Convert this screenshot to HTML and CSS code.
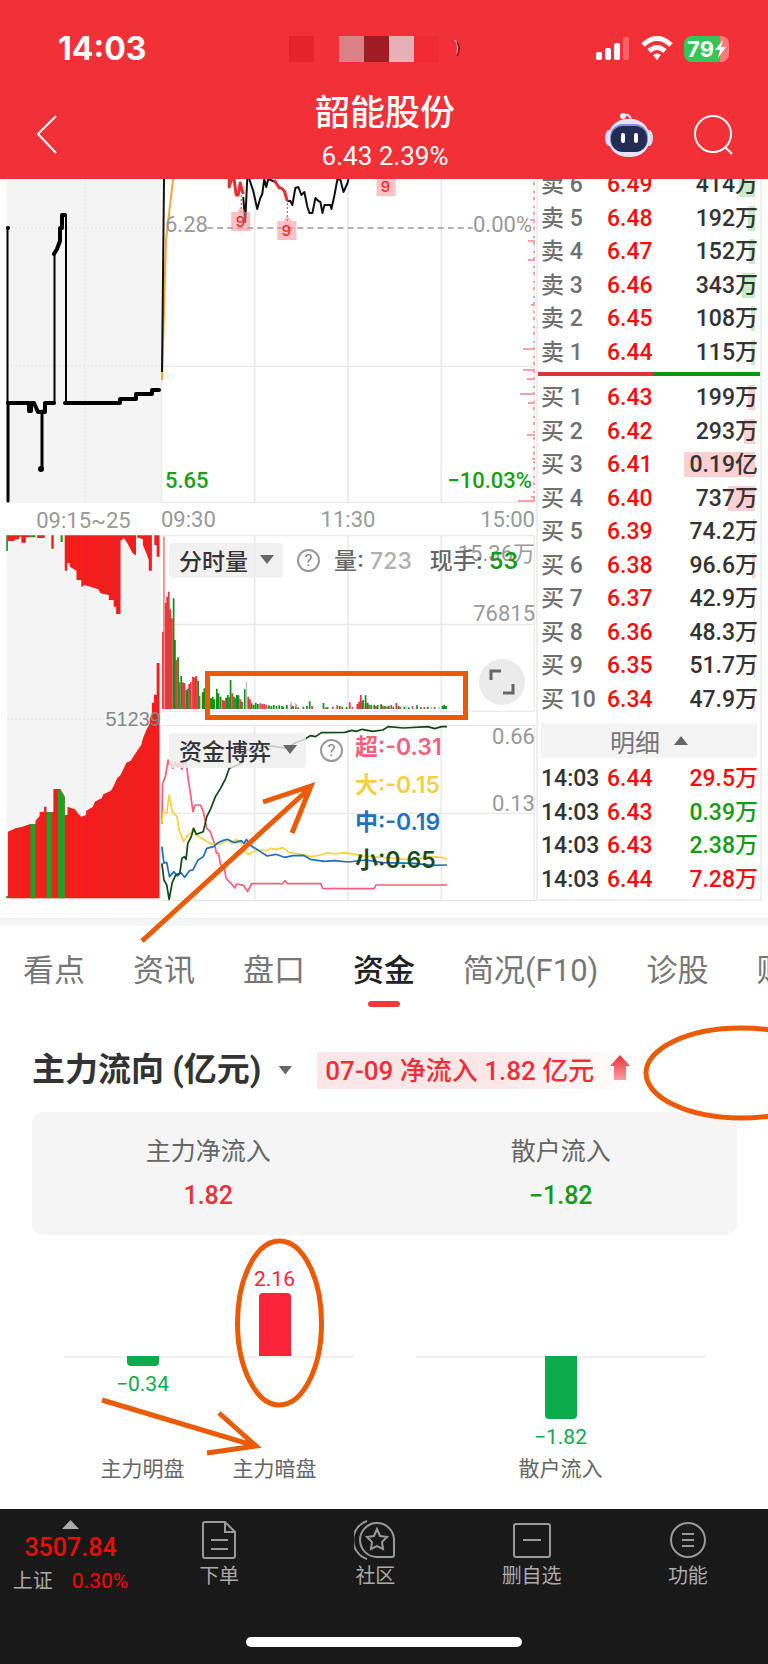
FILE: index.html
```html
<!DOCTYPE html>
<html lang="zh-CN">
<head>
<meta charset="utf-8">
<meta name="viewport" content="width=device-width, initial-scale=1">
<title>韶能股份</title>
<link rel="stylesheet" href="styles.css">
</head>
<body>
<div class="app">
  <header class="header">
    <div class="status">
      <span class="clock">14:03</span>
      <span class="mosaic"><i class="m1"></i><i></i><i class="m2"></i><i class="m3"></i><i class="m4"></i><i class="m5"></i><svg width="8" height="22" viewBox="0 0 8 22"><path d="M2 2q4 4 2 15" fill="none" stroke="#fff" stroke-width="1"/><path d="M4 4q4 6 0 14" fill="none" stroke="#611" stroke-width="1.5"/></svg></span>
      <span class="status-icons">
        <svg width="34" height="26" viewBox="0 0 34 26" fill="#fff"><rect y="16" width="6" height="8" rx="2"/><rect x="9" y="12" width="6" height="12" rx="2"/><rect x="18" y="7" width="6" height="17" rx="2"/><rect x="27" y="1" width="6" height="23" rx="2" opacity=".25"/></svg>
        <svg width="32" height="26" viewBox="0 0 32 26" fill="none" stroke="#fff" stroke-width="5"><path d="M2 9Q16-4 30 9"/><path d="M8 15q8-7 16 0"/><path d="M12 19q4-3 8 0l-4 5z" fill="#fff" stroke="none"/></svg>
        <span class="battery"><span>79</span><svg width="11" height="18" viewBox="0 0 11 18"><path d="M8 0L0 10h5L3 18l8-11H6z" fill="#fff"/></svg></span>
      </span>
    </div>
    <div class="nav">
      <button class="icon-btn back" aria-label="返回"><svg width="24" height="42" viewBox="0 0 24 42"><path d="M21 2L3 20l18 19" fill="none" stroke="#fff" stroke-width="2"/></svg></button>
      <div class="title"><h1>韶能股份</h1><p>6.43 2.39%</p></div>
      <div class="nav-actions">
        <button class="icon-btn" aria-label="智能助手"><svg width="50" height="46" viewBox="0 0 50 46"><path d="M27 8Q26 2 20 3" fill="none" stroke="#dfe3f5" stroke-width="2"/><circle cx="19" cy="4" r="3" fill="#e9ecfa"/><ellipse cx="5" cy="26" rx="4" ry="8" fill="#d9dcf4"/><ellipse cx="45" cy="26" rx="4" ry="8" fill="#d9dcf4"/><rect x="4" y="7" width="42" height="38" rx="19" fill="#e3e5fa"/><rect x="6" y="12" width="38" height="28" rx="13" fill="#8d89e0"/><rect x="7" y="14" width="36" height="26" rx="12" fill="#222c54"/><rect x="17" y="21" width="4" height="10" rx="2" fill="#fff"/><rect x="30" y="21" width="4" height="10" rx="2" fill="#fff"/></svg></button>
        <button class="icon-btn" aria-label="搜索"><svg width="42" height="42" viewBox="0 0 42 42" fill="none" stroke="#fff" stroke-width="2"><circle cx="20" cy="20" r="18"/><path d="M32 33l7 7"/></svg></button>
      </div>
    </div>
  </header>

  <main>
    <section class="market">
      <div class="auction">
        <svg class="plot-price" viewBox="0 179 161 324" preserveAspectRatio="none">
          <rect x="7" y="179" width="154" height="324" fill="#f4f4f4"/>
          <path d="M7 228H161M7 366H161M85 179V503" stroke="#e3e3e3" stroke-dasharray="2 2" fill="none"/>
          <g fill="none" stroke="#000" stroke-linejoin="round" stroke-linecap="round">
            <path d="M7.500 228V403M54.500 254V403M66 216V403" stroke-width="2"/>
            <path d="M8 403V501M42 411V468" stroke-width="3"/>
            <path d="M8 403H29V411H31V403H34L38 412H45V403H54M65 403H120V399H136V394H152V390H159M54 254L57 249L60 241V228H62V215H65" stroke-width="4"/>
          </g>
          <circle cx="8" cy="228" r="2"/><circle cx="41" cy="469" r="3"/>
        </svg>
        <div class="axis axis-left">09:15~25</div>
        <div class="auction-volume">
          <svg viewBox="0 535 161 366" preserveAspectRatio="none">
            <defs><pattern id="stripes" width="8" height="8" patternUnits="userSpaceOnUse"><rect width="8" height="8" fill="#ff1a1a"/><path d="M7 0V8" stroke="#c42c2c" stroke-width="2"/></pattern></defs>
            <rect x="7" y="535" width="154" height="364" fill="#f4f4f4"/>
            <path d="M7 719H161M85 535V899" stroke="#e3e3e3" stroke-dasharray="2 2" fill="none"/>
            <g transform="translate(0 530) scale(.3444 .3333)" fill="url(#stripes)">
              <path d="M22 16V33H40L45 28H56V20H62V38H75V22H88V16ZM108 16V24H130V16ZM149 16V56H156V16ZM188 16V122H195V100H203V110L222 122V150H236V172L245 165L262 170L285 178L292 190L316 195V210H330V230H337V252H350V32L360 25L370 40L385 70L395 76V16ZM398 16V22L415 28V45L425 70L432 90V122H441V16ZM448 16V45H455V80H463V16Z"/>
              <path d="M18 16H23V63H18ZM88 16H103V22H88ZM176 16H182V36H176Z" fill="#189b18"/>
            </g>
            <g transform="translate(0 700) scale(.3444 .3333)" fill="url(#stripes)">
              <path d="M23 595V395L45 385L65 380L88 372H103V362L115 348V336H128V320H135V336H155V267H175L182 280L188 290V345H196V320L218 328L225 338L235 350L250 345V333L270 320L275 305L295 295L300 283L322 272L330 258L340 235L350 225L357 210L367 188L380 182L390 165L400 150L410 135L415 115L425 90L435 70V50H441V8H447V-16H455V-111H463V595Z"/>
              <path d="M88 372H103V595H88ZM135 336H150V595H135ZM168 270L175 272L182 280L188 290V595H168ZM18 588H24V595H18Z" fill="#23a023"/>
            </g>
          </svg>
          <span class="auction-value">51239</span>
        </div>
      </div>

      <div class="intraday">
        <div class="price">
          <svg class="plot-price" viewBox="161 179 373 324" preserveAspectRatio="none">
            <path d="M161.500 366V503M254.500 179V503M347.500 179V503M440.500 179V503M533.500 179V503M161 366.500H534M161 502.500H534" stroke="#e9e9e9" stroke-width="1.500" fill="none"/>
            <path d="M207 228H472" stroke="#999" stroke-width="1.500" stroke-dasharray="6 4"/>
            <g fill="none" stroke-width="2" stroke-linejoin="round">
              <path d="M173 179L166 240L162 380" stroke="#f6a52f"/>
              <path d="M164 179L162 372" stroke="#111"/>
              <path d="M243 197L245 222L247 179M249 179L253 191L257 209L260 198L262 194L264 179L266 187L268 179L275 182M287 201H290L292 205L295 188L298 187L301 195L304 192L307 207L309 213H312L315 198L318 201L320 202L322 213L324 205H330L331 209L334 195L337 179L340 180L343 192L347 183L348 179" stroke="#111"/>
              <path d="M229 179V187L231 180L234 180L236 195H238L240 183L243 194M274 180L279 188L281 188L284 191L287 201" stroke="#e83030" stroke-width="3"/>
              <path d="M241 195V212M287 203V221" stroke="#e83030" stroke-width="1" stroke-dasharray="2 2"/>
              <path d="M533 182V503" stroke="#f4a3a8" stroke-dasharray="3 6 2 4"/>
              <path d="M529 220H534M527 241H534M527 260H534M530 305H534M522 349H534M522 370H534M526 379H534M519 394H534M527 403H534M526 435H534M531 459H534M530 497H534M517 501H534" stroke="#f4a3a8"/>
            </g>
            <path d="M237 212L241 206L245 212H250V231H231V212ZM283 221L287 215L291 221H296V240H277V221ZM376 178H395V196H376Z" fill="#f58d92" fill-opacity=".55"/>
          </svg>
          <span class="mark mark-a">9</span><span class="mark mark-b">9</span><span class="mark mark-c">9</span>
          <span class="tag tag-base">6.28</span><span class="tag tag-zero">0.00%</span>
          <span class="tag tag-low">5.65</span><span class="tag tag-drop">−10.03%</span>
        </div>
        <div class="axis"><span>09:30</span><span>11:30</span><span>15:00</span></div>
        <div class="panel">
          <svg viewBox="161 535 373 177" preserveAspectRatio="none">
            <path d="M161 535.500H534M161 624.500H534M161 711.500H534M254.500 535V712M347.500 535V712M440.500 535V712M533.500 535V712" stroke="#e9e9e9" stroke-width="1.500"/>
            <g transform="translate(0 530) scale(.3444 .3333)" fill="none" stroke-width="5">
              <path stroke="#e63a3e" d="M473 537V305M481 537V218M485 537V200M490 537V185M494 537V238M499 537V265M512 537V390M521 537V457M531 537V457M536 537V460M549 537V462M554 537V456M560 537V440M565 537V442M570 537V438M579 537V498M598 537V520M605 537V510M646 537V510M651 537V512M665 537V502M674 537V490M684 537V505M697 537V508M720 537V500M725 537V508M755 537V520M761 537V521M767 537V522M773 537V526M822 537V530M845 537V524M858 537V524M905 537V528M945 537V532M965 537V530M978 537V526M992 537V530M1014 537V517M1022 537V532M1036 537V522M1041 537V515M1046 537V495M1053 537V510M1060 537V520M1070 537V524M1090 537V528M1110 537V527M1122 537V530M1134 537V526M1149 537V519M1160 537V530M1196 537V529M1230 537V531M1260 537V531"/>
              <path stroke="#e63a3e" stroke-width="3" d="M476 537V20"/>
              <path stroke="#148f19" d="M504 537V205M508 537V330M517 537V382M526 537V438M541 537V480M545 537V476M575 537V452M588 537V487M593 537V475M612 537V505M617 537V500M622 537V508M629 537V476M634 537V490M640 537V500M656 537V503M661 537V495M669 537V450M679 537V500M687 537V495M692 537V496M702 537V515M710 537V478M730 537V520M736 537V524M742 537V518M748 537V522M780 537V526M787 537V528M794 537V525M802 537V528M810 537V526M818 537V528M832 537V525M850 537V528M865 537V532M880 537V530M890 537V528M898 537V514M938 537V519M950 537V532M985 537V528M1005 537V531M1050 537V513M1060 537V496M1066 537V518M1076 537V526M1085 537V524M1095 537V526M1105 537V523M1116 537V528M1127 537V527M1140 537V530M1155 537V528M1172 537V530M1185 537V532M1209 537V526M1220 537V532M1240 537V530M1283 537V527M1288 537V524M1293 537V528"/>
              <path stroke="#bbb" stroke-width="4" d="M715 537V455M844 530V516M857 530V520M935 533V525M1178 537V527M1250 537V530M1273 537V530"/>
            </g>
          </svg>
          <span class="scale scale-top">15.36万</span><span class="scale scale-mid">76815</span>
          <div class="tools">
            <button class="chip">分时量<i class="caret"></i></button>
            <button class="help" aria-label="说明">?</button>
            <span class="reading">量: <b class="muted">723</b></span>
            <span class="reading">现手: <b class="down">53</b></span>
          </div>
          <button class="expand" aria-label="全屏"><svg width="26" height="26" viewBox="0 0 26 26"><path d="M2 11V2H12M24 15V24H14" fill="none" stroke="#666" stroke-width="3"/></svg></button>
        </div>
        <div class="panel fund">
          <svg viewBox="161 725 373 176" preserveAspectRatio="none">
            <path d="M161 725.500H534M161 813.500H534M161 900.500H534M254.500 725V901M347.500 725V901M440.500 725V901M533.500 725V901" stroke="#e9e9e9" stroke-width="1.500"/>
            <g transform="translate(0 700) scale(.3444 .3333)" fill="none" stroke-width="5" stroke-linejoin="round">
              <path stroke="#f4617c" d="M470 372L472 250 480 230 488 180 492 195 496 185 502 205 508 187 514 200 520 190 528 208 534 187 540 185 546 235 552 275 560 335 566 315 582 315 590 335 600 385 610 395 622 430 628 460 634 460 640 495 650 500 656 535 668 548 682 564 686 552 706 556 718 575 730 551 820 551 826 542 834 551 930 551 936 566 1085 566 1090 555 1296 555"/>
              <path stroke="#f7d33c" d="M470 370L474 335 484 340 491 285 500 335 514 350 520 390 533 425 545 405 555 400 560 385 570 405 600 425 615 433 640 432 660 420 672 430 684 418 700 430 712 458 722 463 735 455 750 450 775 452 785 445 800 448 820 443 840 458 870 462 900 470 930 465 950 458 970 462 1000 458 1030 463 1050 468 1150 475 1190 480 1240 470 1280 472 1296 478"/>
              <path stroke="#1f6fc0" d="M470 440L476 490 484 487 492 530 505 515 515 528 525 518 536 532 550 512 560 510 575 480 590 470 600 445 620 440 630 430 645 422 660 418 680 428 700 422 708 430 715 418 725 435 755 455 775 468 800 463 825 472 850 467 880 466 900 478 940 484 970 482 1010 486 1060 480 1110 488 1200 490 1250 496 1296 495"/>
              <path stroke="#0d4a15" d="M470 490L476 540 484 555 491 598 500 548 510 525 522 520 528 475 535 470 540 478 545 430 555 410 562 385 570 403 590 395 600 350 610 330 625 290 640 265 655 235 665 205 690 195 700 190 715 150 735 155 760 140 790 138 830 145 860 127 880 120 900 107 915 110 932 98 1000 97 1020 91 1035 94 1050 88 1080 94 1110 90 1125 80 1170 84 1240 80 1260 86 1280 80 1296 80"/>
            </g>
          </svg>
          <div class="tools">
            <button class="chip">资金博弈<i class="caret"></i></button>
            <button class="help" aria-label="说明">?</button>
          </div>
          <ul class="legend"><li class="l-super">超:-0.31</li><li class="l-big">大:-0.15</li><li class="l-mid">中:-0.19</li><li class="l-small">小:0.65</li></ul>
          <span class="scale scale-fund">0.66</span><span class="scale scale-low">0.13</span>
        </div>
      </div>

      <div class="book">
        <table class="quotes asks">
          <tr><th>卖 6</th><td>6.49</td><td><i style="width:16px"></i><span>414万</span></td></tr>
          <tr><th>卖 5</th><td>6.48</td><td><i style="width:7px"></i><span>192万</span></td></tr>
          <tr><th>卖 4</th><td>6.47</td><td><i style="width:6px"></i><span>152万</span></td></tr>
          <tr><th>卖 3</th><td>6.46</td><td><i style="width:13px"></i><span>343万</span></td></tr>
          <tr><th>卖 2</th><td>6.45</td><td><i style="width:4px"></i><span>108万</span></td></tr>
          <tr><th>卖 1</th><td>6.44</td><td><i style="width:4px"></i><span>115万</span></td></tr>
        </table>
        <div class="ratio"></div>
        <table class="quotes bids">
          <tr><th>买 1</th><td>6.43</td><td><i style="width:7px"></i><span>199万</span></td></tr>
          <tr><th>买 2</th><td>6.42</td><td><i style="width:11px"></i><span>293万</span></td></tr>
          <tr><th>买 3</th><td>6.41</td><td><i style="width:71px"></i><span>0.19亿</span></td></tr>
          <tr><th>买 4</th><td>6.40</td><td><i style="width:27px"></i><span>737万</span></td></tr>
          <tr><th>买 5</th><td>6.39</td><td><i style="width:2px"></i><span>74.2万</span></td></tr>
          <tr><th>买 6</th><td>6.38</td><td><i style="width:3px"></i><span>96.6万</span></td></tr>
          <tr><th>买 7</th><td>6.37</td><td><i style="width:1px"></i><span>42.9万</span></td></tr>
          <tr><th>买 8</th><td>6.36</td><td><i style="width:1px"></i><span>48.3万</span></td></tr>
          <tr><th>买 9</th><td>6.35</td><td><i style="width:1px"></i><span>51.7万</span></td></tr>
          <tr><th>买 10</th><td>6.34</td><td><i style="width:1px"></i><span>47.9万</span></td></tr>
        </table>
        <button class="detail">明细<i class="caret up"></i></button>
        <table class="quotes trades">
          <tr><th>14:03</th><td>6.44</td><td class="rise">29.5万</td></tr>
          <tr><th>14:03</th><td>6.43</td><td class="down">0.39万</td></tr>
          <tr><th>14:03</th><td>6.43</td><td class="down">2.38万</td></tr>
          <tr><th>14:03</th><td>6.44</td><td class="rise">7.28万</td></tr>
        </table>
      </div>
    </section>

    <nav class="tabs">
      <a href="#">看点</a><a href="#">资讯</a><a href="#">盘口</a><a href="#" class="active">资金</a><a href="#">简况(F10)</a><a href="#">诊股</a><a href="#">财务</a>
    </nav>

    <section class="flow">
      <div class="flow-head">
        <h2>主力流向 (亿元)</h2><i class="caret"></i>
        <span class="badge">07-09 净流入 1.82 亿元<svg width="20" height="26" viewBox="0 0 20 26"><defs><linearGradient id="fade" x2="0" y2="1"><stop stop-color="#ed2f38"/><stop offset="1" stop-color="#f7a0a3"/></linearGradient></defs><path d="M10 0L20 11H16V25H4V11H0Z" fill="url(#fade)"/></svg></span>
      </div>
      <dl class="summary">
        <div><dt>主力净流入</dt><dd class="up-text">1.82</dd></div>
        <div><dt>散户流入</dt><dd class="down">−1.82</dd></div>
      </dl>
      <div class="bars">
        <div class="group">
          <div class="col"><div class="pos"></div><div class="neg"><i style="height:10px"></i><span>−0.34</span></div><p>主力明盘</p></div>
          <div class="col"><div class="pos"><span>2.16</span><i style="height:63px"></i></div><div class="neg"></div><p>主力暗盘</p></div>
        </div>
        <div class="group">
          <div class="col"><div class="pos"></div><div class="neg"><i style="height:63px"></i><span>−1.82</span></div><p>散户流入</p></div>
        </div>
      </div>
    </section>
  </main>

  <footer class="bottom">
    <div class="bottom-items">
      <button class="index"><i class="caret up"></i><strong>3507.84</strong><span>上证 <em>0.30%</em></span></button>
      <button><svg width="36" height="40" viewBox="0 0 36 40"><path d="M4 2H24L34 12V36Q34 38 32 38H4Q2 38 2 36V4Q2 2 4 2ZM24 2V12H34M10 20H27M10 29H27"/></svg>下单</button>
      <button><svg width="42" height="40" viewBox="0 0 42 40"><path d="M40 35V19A17 17 0 1 0 23 37H38Q40 37 40 35ZM13 1A20 20 0 0 0 13 39M23 9L26 16L33 17L28 22L29 29L23 26L17 29L18 22L13 17L20 16Z"/></svg>社区</button>
      <button><svg width="38" height="40" viewBox="0 0 38 40"><path d="M3 4H35Q37 4 37 6V35Q37 37 35 37H3Q1 37 1 35V6Q1 4 3 4ZM10 20H28"/></svg>删自选</button>
      <button><svg width="38" height="40" viewBox="0 0 38 40"><circle cx="19" cy="20" r="17"/><path d="M13 14H25M13 20H25M13 26H25"/></svg>功能</button>
    </div>
    <div class="home-bar"></div>
  </footer>

  <svg class="notes" width="768" height="1664" viewBox="0 0 768 1664" fill="none" stroke="#eb5a05" stroke-width="5">
    <rect x="207.500" y="673.500" width="258" height="44"/>
    <path d="M142 941L311 787M263 802L311 786L292 833"/>
    <ellipse cx="741" cy="1073" rx="95" ry="45"/>
    <ellipse cx="279.500" cy="1323" rx="42" ry="82"/>
    <path d="M102 1400L256 1446M219 1413L256 1446L207 1453"/>
  </svg>
</div>
</body>
</html>
```
FILE: styles.css
```css
* { box-sizing: border-box; margin: 0; padding: 0; }
body { background: #fff; color: #333; font-family: Roboto, "Noto Sans CJK SC", sans-serif; }
button { border: 0; background: none; font: inherit; color: inherit; }
i, em { font-style: normal; }
a { text-decoration: none; color: inherit; }
.app { position: relative; overflow: hidden; }

.header { position: relative; height: 179px; background: #f23037; color: #fff; }
.status { display: flex; justify-content: space-between; align-items: center; padding: 32px 39px 0 58px; height: 66px; }
.clock { width: 231px; font: 700 32px/34px Inter, sans-serif; }
.mosaic { display: flex; flex: 1; align-items: center; }
.mosaic i { width: 25px; height: 26px; }
.mosaic svg { margin-left: 14px; }
.m1 { background: #e5242a; }
.m2 { background: #da8185; }
.m3 { background: #9f1c22; }
.m4 { background: #e6b1b5; }
.m5 { background: #ef2a33; }
.status-icons { display: flex; align-items: center; gap: 11px; }
.battery { position: relative; display: flex; align-items: center; justify-content: center; gap: 1px; width: 45px; height: 26px; border-radius: 8px; background: linear-gradient(90deg, #33c759 80%, #f87c7c 80%); font: 700 22px/26px Inter, sans-serif; }
.nav { display: grid; grid-template-columns: 1fr auto 1fr; align-items: center; height: 113px; padding: 0 33px 0 35px; }
.icon-btn { display: flex; }
.back { margin-top: 24px; }
.title { padding-top: 20px; text-align: center; }
.title h1 { font-size: 35px; font-weight: 500; line-height: 46px; }
.title p { font-size: 26px; line-height: 38px; }
.nav-actions { display: flex; justify-content: flex-end; align-items: center; gap: 39px; margin-top: 24px; }

.market { display: grid; grid-template-columns: 161px 1fr 227px; padding-right: 6px; height: 740px; border-bottom: 1px solid #eee; }
.market svg { display: block; width: 100%; height: 100%; }
.market .plot-price { height: 324px; }
.axis { display: flex; justify-content: space-between; height: 32px; font-size: 22px; line-height: 33px; color: #999; }
.axis-left { justify-content: center; padding-left: 6px; line-height: 35px; }
.auction-volume { position: relative; height: 366px; }
.auction-value { position: absolute; right: 0; top: 171px; font: 20px/26px "Liberation Sans", sans-serif; color: #888; }
.price, .panel { position: relative; }
.panel { height: 177px; margin-bottom: 13px; }
.tag, .scale { position: absolute; font-size: 22px; line-height: 28px; color: #999; }
.tag-base { left: 4px; top: 32px; }
.tag-zero { right: 3px; top: 32px; }
.tag-low { left: 4px; bottom: 8px; font-weight: 500; color: #15a015; }
.tag-drop { right: 3px; bottom: 8px; font-weight: 500; color: #15a015; }
.mark { position: absolute; width: 19px; font: 500 15px/19px Inter, sans-serif; text-align: center; color: #e52b33; }
.mark-a { left: 70px; top: 33px; }
.mark-b { left: 116px; top: 42px; }
.mark-c { left: 215px; top: -2px; }
.tools { position: absolute; left: 8px; top: 8px; display: flex; align-items: center; white-space: nowrap; }
.chip { display: flex; align-items: center; gap: 12px; height: 35px; padding: 0 9px 2px 10px; border-radius: 4px; background: rgba(238, 238, 238, .8); font-size: 23px; font-weight: 500; }
.caret { display: inline-block; width: 14px; height: 9px; background: #666; clip-path: polygon(0 0, 100% 0, 50% 100%); }
.caret.up { clip-path: polygon(50% 0, 100% 100%, 0 100%); }
.help { width: 23px; height: 23px; margin: 0 14px; border: 2px solid #999; border-radius: 50%; font-size: 17px; line-height: 19px; color: #888; }
.reading { margin-right: 18px; font: 500 23px/34px Inter, "Noto Sans CJK SC", sans-serif; color: #666; }
.muted { font-weight: 500; color: #b0b0b0; }
.reading .down { font-weight: 600; }
.down { color: #149b14; }
.scale { right: 0; }
.scale-top { top: 5px; }
.scale-mid { top: 65px; }
.scale-fund { top: -2px; }
.scale-low { top: 65px; }
.expand { position: absolute; right: 10px; top: 124px; display: grid; place-items: center; width: 46px; height: 46px; border-radius: 50%; background: #ebebeb; }
.market .expand svg { width: 26px; height: 26px; }
.fund { height: 176px; margin-bottom: 0; }
.legend { position: absolute; left: 194px; top: 4px; display: grid; list-style: none; height: 150px; font: 600 23px/37px Inter, "Noto Sans CJK SC", sans-serif; }
.l-super { color: #f4617c; }
.l-big { color: #f4cf42; }
.l-mid { color: #2372c0; }
.l-small { color: #164d1a; }

.book { height: 722px; margin-left: 1px; border: solid #eee; border-width: 0 2px 2px; overflow: hidden; }
.quotes { display: block; font-size: 23px; font-weight: 500; line-height: 33px; }
.quotes tbody { display: grid; grid-auto-rows: 1fr; height: 100%; padding: 0 2px 0 3px; }
.quotes tr { display: grid; grid-template-columns: 66px 1fr 96px; align-items: center; }
.quotes th { font-weight: 500; text-align: left; white-space: nowrap; color: #707070; }
.quotes td { color: #fa0c0c; }
.quotes td:last-child { position: relative; text-align: right; color: #333; }
.quotes td i { position: absolute; right: 3px; top: 4px; height: 25px; }
.quotes td span { position: relative; }
.asks { height: 201px; margin-top: -11px; }
.asks i { background: #c8ebc8; }
.bids { height: 335px; margin-top: 5px; }
.bids i { background: #fbd0d3; }
.ratio { height: 4px; margin-top: 3px; background: linear-gradient(90deg, #e03338 52%, #0a970e 52%); }
.detail { display: flex; align-items: center; justify-content: center; gap: 14px; width: calc(100% - 6px); height: 35px; margin: 7px 0 4px 3px; background: #f4f4f4; font-size: 25px; color: #777; }
.trades { height: 134px; }
.trades th { color: #333; }
.quotes td.rise { color: #fa0c0c; }
.quotes td.down { color: #149b14; }

.tabs { display: flex; gap: 48px; height: 90px; padding: 21px 0 0 23px; border-top: 7px solid #f5f5f5; overflow: hidden; font-size: 31px; line-height: 48px; color: #777; }
.tabs a { flex: none; }
.tabs .active { font-weight: 500; color: #222; }
.tabs .active::after { content: ""; display: block; width: 32px; height: 6px; margin: 6px auto 0; border-radius: 3px; background: #f3383b; }

.flow { padding: 40px 31px 0 32px; }
.flow-head { display: flex; align-items: center; height: 42px; margin-bottom: 21px; white-space: nowrap; }
.flow-head h2 { margin-right: 17px; font-size: 33px; line-height: 42px; }
.badge { display: flex; align-items: center; gap: 16px; height: 37px; margin-left: 25px; padding: 0 8px 4px; border-radius: 3px; background: linear-gradient(90deg, #fce7e8 55%, #fff); font-size: 26px; font-weight: 500; color: #ed3038; }
.summary { display: grid; grid-template-columns: 1fr 1fr; padding: 21px 0 20px; border-radius: 12px; background: #f5f5f5; text-align: center; }
.summary dt { font-size: 25px; line-height: 38px; color: #666; }
.summary dd { margin-top: 6px; font-size: 25px; font-weight: 500; line-height: 38px; }
.up-text { color: #ed3038; }
.bars { display: grid; grid-template-columns: 1fr 1fr; gap: 63px; padding: 22px 32px 26px; }
.group { display: flex; justify-content: center; gap: 48px; background: linear-gradient(#f0f0f0, #f0f0f0) 0 99px / 100% 2px no-repeat; }
.col { width: 84px; text-align: center; font-size: 21px; line-height: 28px; white-space: nowrap; }
.pos, .neg { display: flex; flex-direction: column; align-items: center; height: 99px; }
.pos { justify-content: flex-end; color: #fc2438; }
.neg { color: #0cab4c; }
.pos i { width: 32px; border-radius: 4px 4px 0 0; background: #fc2438; }
.neg i { width: 32px; margin-bottom: 4px; border-radius: 0 0 4px 4px; background: #0cab4c; }
.col p { color: #666; }

.bottom { height: 155px; padding-top: 11px; background: #191919; color: #aaa; }
.bottom-items { display: grid; grid-template-columns: 141px repeat(4, 1fr); height: 117px; padding-right: 2px; align-items: start; }
.bottom-items button { display: flex; flex-direction: column; align-items: center; font-size: 20px; line-height: 28px; white-space: nowrap; }
.bottom-items svg { margin-bottom: 2px; fill: none; stroke: #999; stroke-width: 2; }
.index .caret { width: 17px; height: 9px; background: #aaa; }
.index strong { font-size: 25px; font-weight: 500; line-height: 38px; color: #fa0606; }
.index em { margin-left: 14px; font-size: 21px; color: #fa0606; }
.home-bar { width: 36%; height: 10px; margin: 0 auto; border-radius: 5px; background: #fff; }
.notes { position: absolute; left: 0; top: 0; pointer-events: none; }
```
